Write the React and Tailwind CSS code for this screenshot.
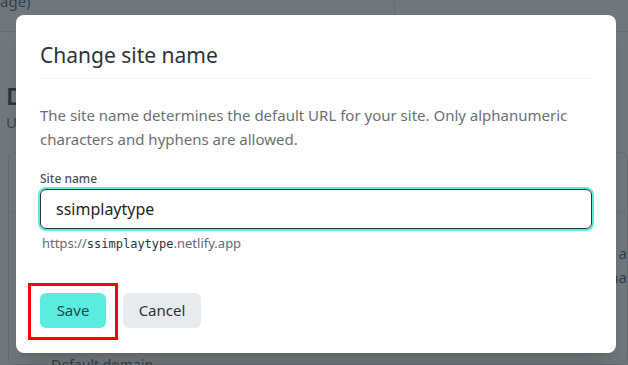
import React from "react";

export default function App() {
  const font = { fontFamily: '"Noto Sans", "Open Sans", sans-serif' };
  return (
    <div className="relative w-[628px] h-[365px] overflow-hidden bg-white" style={font}>
      {/* underlying page */}
      <div className="flex flex-col w-full h-full">
        <div className="flex h-[32px] border-b border-gray-300 bg-gray-50">
          <div className="w-[395px] border-r border-gray-300 text-[15px] leading-[14px] text-gray-700 -mt-[6px]">age)</div>
          <div className="flex-1"></div>
        </div>
        <div className="pl-[6px] pt-[50px] text-[24px] font-semibold text-gray-900 leading-[28px]">D</div>
        <div className="pl-[6px] text-[15px] text-gray-600 leading-[24px]">U</div>
        <div className="mt-[18px] ml-[8px] mr-0 flex-1 border border-gray-300 rounded-lg flex flex-col">
          <div className="h-[60px] border-b border-gray-200"></div>
          <div className="flex justify-end pr-0 pt-[28px] text-[15px] text-gray-700 leading-[24px] flex-col items-end">
            <span>a</span>
            <span>na</span>
          </div>
          <div className="mt-auto pl-[42px] text-[14px] text-gray-700 leading-[10px] -mb-[6px]">Default domain</div>
        </div>
      </div>
      {/* overlay */}
      <div className="absolute inset-0 bg-[rgba(52,63,70,0.7)]"></div>
      {/* modal */}
      <div className="absolute left-[16px] top-[15px] w-[600px] h-[338px] bg-white rounded-[8px] shadow-xl px-[24px] pt-[26px] flex flex-col">
        <h2 className="text-[21px] leading-[28px] text-[#2d3338] pb-[9px] border-b border-gray-100">Change site name</h2>
        <p className="mt-[24px] text-[15px] leading-[24px] text-[#6b7075]">
          The site name determines the default URL for your site. Only alphanumeric characters and hyphens are allowed.
        </p>
        <label className="mt-[20px] text-[12px] leading-[16px] text-[#4b5156] font-medium">Site name</label>
        <div className="mt-[2px] h-[40px] rounded-[6px] border border-[#2d3338] ring-2 ring-[#5cebdf] flex items-center px-[15px] text-[16px] text-[#1f2428]">
          ssimplaytype
        </div>
        <div className="mt-[6px] pl-[2px] text-[13px] leading-[16px] text-[#656a6f]">
          https://<span style={{ fontFamily: '"DejaVu Sans Mono", monospace' }} className="text-[12px] text-[#2d3338]">ssimplaytype</span>.netlify.app
        </div>
        <div className="mt-[41px] flex items-center gap-[17px]">
          <div className="relative">
            <button className="h-[35px] w-[66px] rounded-[6px] bg-[#5cebdf] text-[15px] text-[#1f4a4a]">Save</button>
            <div className="absolute -left-[12px] -top-[10px] w-[90px] h-[57px] border-[3px] border-[#ff0000]"></div>
          </div>
          <button className="h-[35px] w-[78px] rounded-[6px] bg-[#e8ebee] text-[15px] text-[#2d3338]">Cancel</button>
        </div>
      </div>
    </div>
  );
}
